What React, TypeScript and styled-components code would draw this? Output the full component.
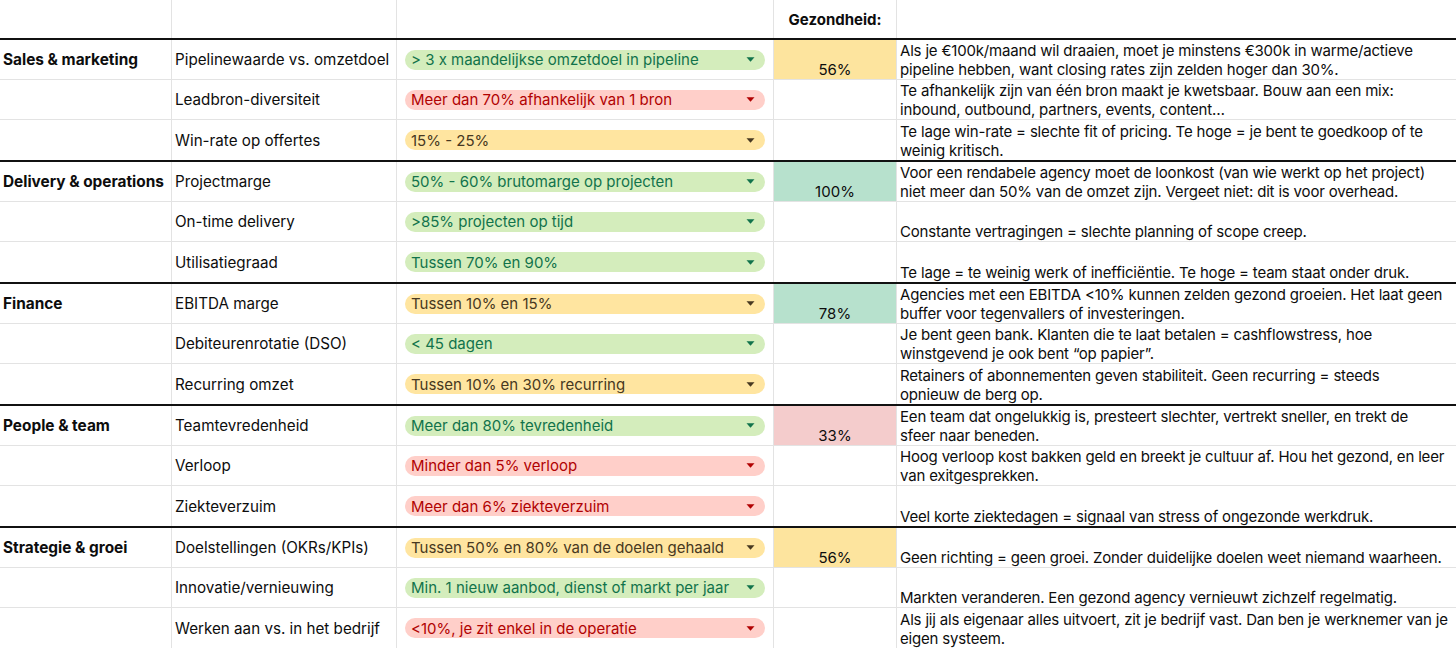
import React from 'react';
import styled, { createGlobalStyle } from 'styled-components';

type Tone = 'green' | 'red' | 'yellow';
type Health = 'yellow' | 'teal' | 'pink';

interface Metric {
  name: string;
  target: string;
  tone: Tone;
  note: string;
}

interface Group {
  title: string;
  health: string;
  healthTone: Health;
  metrics: Metric[];
}

const groups: Group[] = [
  {
    title: 'Sales & marketing',
    health: '56%',
    healthTone: 'yellow',
    metrics: [
      {
        name: 'Pipelinewaarde vs. omzetdoel',
        target: '> 3 x maandelijkse omzetdoel in pipeline',
        tone: 'green',
        note: 'Als je €100k/maand wil draaien, moet je minstens €300k in warme/actieve\npipeline hebben, want closing rates zijn zelden hoger dan 30%.',
      },
      {
        name: 'Leadbron-diversiteit',
        target: 'Meer dan 70% afhankelijk van 1 bron',
        tone: 'red',
        note: 'Te afhankelijk zijn van één bron maakt je kwetsbaar. Bouw aan een mix:\ninbound, outbound, partners, events, content…',
      },
      {
        name: 'Win-rate op offertes',
        target: '15% - 25%',
        tone: 'yellow',
        note: 'Te lage win-rate = slechte fit of pricing. Te hoge = je bent te goedkoop of te\nweinig kritisch.',
      },
    ],
  },
  {
    title: 'Delivery & operations',
    health: '100%',
    healthTone: 'teal',
    metrics: [
      {
        name: 'Projectmarge',
        target: '50% - 60% brutomarge op projecten',
        tone: 'green',
        note: 'Voor een rendabele agency moet de loonkost (van wie werkt op het project)\nniet meer dan 50% van de omzet zijn. Vergeet niet: dit is voor overhead.',
      },
      {
        name: 'On-time delivery',
        target: '>85% projecten op tijd',
        tone: 'green',
        note: 'Constante vertragingen = slechte planning of scope creep.',
      },
      {
        name: 'Utilisatiegraad',
        target: 'Tussen 70% en 90%',
        tone: 'green',
        note: 'Te lage = te weinig werk of inefficiëntie. Te hoge = team staat onder druk.',
      },
    ],
  },
  {
    title: 'Finance',
    health: '78%',
    healthTone: 'teal',
    metrics: [
      {
        name: 'EBITDA marge',
        target: 'Tussen 10% en 15%',
        tone: 'yellow',
        note: 'Agencies met een EBITDA <10% kunnen zelden gezond groeien. Het laat geen\nbuffer voor tegenvallers of investeringen.',
      },
      {
        name: 'Debiteurenrotatie (DSO)',
        target: '< 45 dagen',
        tone: 'green',
        note: 'Je bent geen bank. Klanten die te laat betalen = cashflowstress, hoe\nwinstgevend je ook bent “op papier”.',
      },
      {
        name: 'Recurring omzet',
        target: 'Tussen 10% en 30% recurring',
        tone: 'yellow',
        note: 'Retainers of abonnementen geven stabiliteit. Geen recurring = steeds\nopnieuw de berg op.',
      },
    ],
  },
  {
    title: 'People & team',
    health: '33%',
    healthTone: 'pink',
    metrics: [
      {
        name: 'Teamtevredenheid',
        target: 'Meer dan 80% tevredenheid',
        tone: 'green',
        note: 'Een team dat ongelukkig is, presteert slechter, vertrekt sneller, en trekt de\nsfeer naar beneden.',
      },
      {
        name: 'Verloop',
        target: 'Minder dan 5% verloop',
        tone: 'red',
        note: 'Hoog verloop kost bakken geld en breekt je cultuur af. Hou het gezond, en leer\nvan exitgesprekken.',
      },
      {
        name: 'Ziekteverzuim',
        target: 'Meer dan 6% ziekteverzuim',
        tone: 'red',
        note: 'Veel korte ziektedagen = signaal van stress of ongezonde werkdruk.',
      },
    ],
  },
  {
    title: 'Strategie & groei',
    health: '56%',
    healthTone: 'yellow',
    metrics: [
      {
        name: 'Doelstellingen (OKRs/KPIs)',
        target: 'Tussen 50% en 80% van de doelen gehaald',
        tone: 'yellow',
        note: 'Geen richting = geen groei. Zonder duidelijke doelen weet niemand waarheen.',
      },
      {
        name: 'Innovatie/vernieuwing',
        target: 'Min. 1 nieuw aanbod, dienst of markt per jaar',
        tone: 'green',
        note: 'Markten veranderen. Een gezond agency vernieuwt zichzelf regelmatig.',
      },
      {
        name: 'Werken aan vs. in het bedrijf',
        target: '<10%, je zit enkel in de operatie',
        tone: 'red',
        note: 'Als jij als eigenaar alles uitvoert, zit je bedrijf vast. Dan ben je werknemer van je\neigen systeem.',
      },
    ],
  },
];

const chipColors: Record<Tone, { bg: string; fg: string }> = {
  green: { bg: '#d4edbc', fg: '#11734b' },
  red: { bg: '#ffcfc9', fg: '#b10202' },
  yellow: { bg: '#ffe5a0', fg: '#473821' },
};

const healthColors: Record<Health, string> = {
  yellow: '#fde49e',
  teal: '#b7e1cd',
  pink: '#f4cccc',
};

const GlobalStyle = createGlobalStyle`
  * { box-sizing: border-box; }
  body {
    margin: 0;
    background: #fff;
    font-family: Inter, "Liberation Sans", Arial, sans-serif;
    color: #0d0d0d;
  }
`;

const Sheet = styled.div`
  width: 1456px;
  height: 650px;
  overflow: hidden;
  background: #fff;
`;

const columns = '172px 225px 377px 123px 559px';

const HeaderRow = styled.div`
  display: grid;
  grid-template-columns: ${columns};
  height: 38px;
`;

const Section = styled.div`
  border-top: 2px solid #111;
`;

const Row = styled.div`
  display: grid;
  grid-template-columns: ${columns};
  height: 40px;
  border-bottom: 1px solid #e3e3e3;

  &:last-child {
    border-bottom: none;
  }
`;

const Cell = styled.div`
  border-right: 1px solid #e3e3e3;
  display: flex;
  align-items: center;
  padding: 0 3px;
  font-size: 15.2px;
  white-space: nowrap;
  overflow: hidden;

  &:last-child {
    border-right: none;
  }
`;

const HeaderLabel = styled(Cell)`
  justify-content: center;
  font-weight: 700;
  font-size: 15px;
  padding-top: 1px;
`;

const Category = styled(Cell)`
  font-weight: 700;
  font-size: 15.4px;
`;

const ChipCell = styled(Cell)`
  padding: 0 8px;
`;

const Chip = styled.div<{ $tone: Tone }>`
  flex: 1;
  height: 20px;
  border-radius: 10px;
  display: flex;
  align-items: center;
  justify-content: space-between;
  padding: 0 10px 0 6px;
  background: ${(p) => chipColors[p.$tone].bg};
  color: ${(p) => chipColors[p.$tone].fg};
  font-size: 15px;
`;

const HealthCell = styled(Cell)<{ $tone?: Health }>`
  justify-content: center;
  align-items: flex-end;
  padding-bottom: 0;
  font-size: 15px;
  line-height: 19px;
  background: ${(p) => (p.$tone ? healthColors[p.$tone] : 'transparent')};
`;

const Note = styled(Cell)`
  align-items: flex-end;
  white-space: pre;
  font-size: 15px;
  line-height: 19px;
  padding-bottom: 0;
  letter-spacing: -0.18px;
`;

const Caret = ({ color }: { color: string }) => (
  <svg width="9" height="5" viewBox="0 0 9 5">
    <path d="M0.5 0.3 L8.5 0.3 L4.5 4.8 Z" fill={color} />
  </svg>
);

const App: React.FC = () => {
  return (
    <>
      <GlobalStyle />
      <Sheet>
        <HeaderRow>
          <Cell />
          <Cell />
          <Cell />
          <HeaderLabel>Gezondheid:</HeaderLabel>
          <Cell />
        </HeaderRow>
        {groups.map((group) => (
          <Section key={group.title}>
            {group.metrics.map((m, i) => (
              <Row key={m.name}>
                <Category>{i === 0 ? group.title : ''}</Category>
                <Cell>{m.name}</Cell>
                <ChipCell>
                  <Chip $tone={m.tone}>
                    <span>{m.target}</span>
                    <Caret color={chipColors[m.tone].fg} />
                  </Chip>
                </ChipCell>
                <HealthCell $tone={i === 0 ? group.healthTone : undefined}>
                  {i === 0 ? group.health : ''}
                </HealthCell>
                <Note>{m.note}</Note>
              </Row>
            ))}
          </Section>
        ))}
      </Sheet>
    </>
  );
};

export default App;
